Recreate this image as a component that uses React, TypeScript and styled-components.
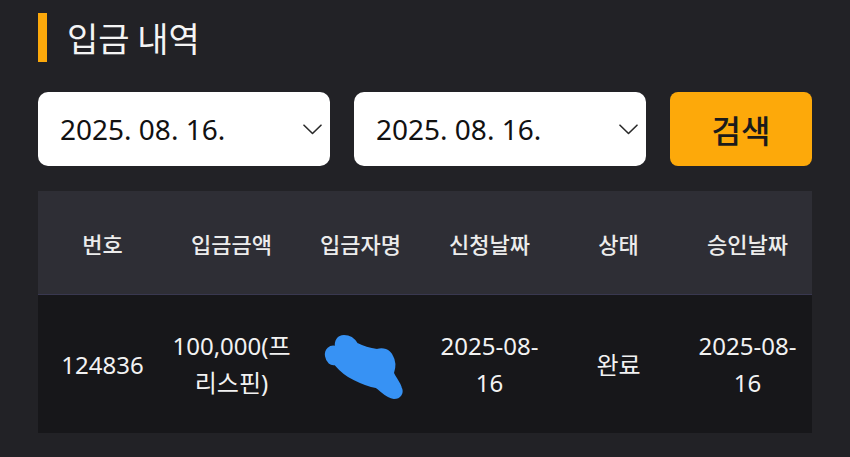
import React from 'react';
import styled, { createGlobalStyle } from 'styled-components';

type Deposit = {
    id: number;
    amount: string;
    name: string;
    requestedAt: string;
    status: string;
    approvedAt: string;
};

const columns = ['번호', '입금금액', '입금자명', '신청날짜', '상태', '승인날짜'];

const deposits: Deposit[] = [
    {
        id: 124836,
        amount: '100,000(프리스핀)',
        name: '',
        requestedAt: '2025-08-16',
        status: '완료',
        approvedAt: '2025-08-16',
    },
];

const GlobalStyle = createGlobalStyle`
    html, body {
        margin: 0;
        padding: 0;
        background: #222226;
    }
    body {
        font-family: 'Noto Sans', 'Noto Sans CJK KR', sans-serif;
        color: #ffffff;
    }
`;

const Chevron = () => (
    <svg width="19" height="11" viewBox="0 0 19 11" fill="none">
        <path d="M1 1.2L9.5 9.5L18 1.2" stroke="#2a2a2a" strokeWidth="1.6" strokeLinecap="round" strokeLinejoin="round" />
    </svg>
);

// blue marker scribble hiding the depositor name
const Redaction = () => (
    <svg width="90" height="72" viewBox="0 0 90 72" fill="none">
        <path
            d="M24 5 C18 5 15 10 16 16 C10 14 5 19 6 25 C7 31 11 34 15 33 C21 40 27 45 34 48 C42 52 50 55 56 56 C62 60 66 66 74 67 C80 67 83 62 81 57 C79 51 75 47 73 42 C75 36 75 30 72 25 C69 19 63 17 57 19 C50 18 43 16 37 13 C34 8 30 5 24 5 Z"
            fill="#3792f4"
            stroke="#3792f4"
            strokeWidth="2"
            strokeLinejoin="round"
        />
    </svg>
);

// splits "2025-08-16" so it wraps after the month like the app does
const splitDate = (date: string) => {
    const idx = date.lastIndexOf('-') + 1;
    return (
        <>
            {date.slice(0, idx)}
            <br />
            {date.slice(idx)}
        </>
    );
};

const DepositHistory: React.FC = () => {
    return (
        <Page>
            <GlobalStyle />
            <TitleRow>
                <TitleMark />
                <Title>입금 내역</Title>
            </TitleRow>
            <SearchRow>
                <DateSelect>
                    <DateText>2025. 08. 16.</DateText>
                    <Chevron />
                </DateSelect>
                <DateSelect>
                    <DateText>2025. 08. 16.</DateText>
                    <Chevron />
                </DateSelect>
                <SearchButton>검색</SearchButton>
            </SearchRow>
            <Table>
                <HeadRow>
                    {columns.map((c) => (
                        <HeadCell key={c}>{c}</HeadCell>
                    ))}
                </HeadRow>
                {deposits.map((d) => (
                    <BodyRow key={d.id}>
                        <Cell>{d.id}</Cell>
                        <Cell>{d.amount}</Cell>
                        <Cell>
                            <NameBox>
                                {d.name}
                                <RedactOverlay>
                                    <Redaction />
                                </RedactOverlay>
                            </NameBox>
                        </Cell>
                        <Cell>{splitDate(d.requestedAt)}</Cell>
                        <Cell>{d.status}</Cell>
                        <Cell>{splitDate(d.approvedAt)}</Cell>
                    </BodyRow>
                ))}
            </Table>
        </Page>
    );
};

const Page = styled.div`
    width: 850px;
    height: 457px;
    box-sizing: border-box;
    padding: 13px 38px 0;
    background: #222226;
    overflow: hidden;
`;

const TitleRow = styled.div`
    display: flex;
    align-items: center;
    height: 49px;
    gap: 20px;
`;

const TitleMark = styled.div`
    width: 9px;
    height: 49px;
    background: #fca90b;
`;

const Title = styled.h1`
    margin: 0;
    font-family: 'Noto Sans CJK KR', sans-serif;
    font-size: 34px;
    font-weight: 400;
    line-height: 49px;
    color: #f4f4f4;
`;

const SearchRow = styled.div`
    display: flex;
    gap: 24px;
    margin-top: 30px;
    height: 74px;
`;

const DateSelect = styled.div`
    display: flex;
    align-items: center;
    justify-content: space-between;
    width: 292px;
    box-sizing: border-box;
    padding: 0 8px 0 22px;
    background: #ffffff;
    border-radius: 10px;
`;

const DateText = styled.span`
    font-family: 'Noto Sans', sans-serif;
    font-size: 28px;
    color: #111111;
`;

const SearchButton = styled.button`
    flex: 1;
    border: none;
    border-radius: 8px;
    background: #fda90a;
    color: #1b1b1b;
    font-family: 'Noto Sans CJK KR', sans-serif;
    font-size: 32px;
    font-weight: 500;
    padding: 0;
    cursor: pointer;
`;

const Table = styled.div`
    margin-top: 25px;
    width: 774px;
`;

const HeadRow = styled.div`
    display: grid;
    grid-template-columns: repeat(6, 1fr);
    height: 103px;
    align-items: center;
    background: #2e2e35;
    border-bottom: 1px solid #393850;
`;

const HeadCell = styled.div`
    text-align: center;
    font-family: 'Noto Sans CJK KR', sans-serif;
    font-size: 22px;
    font-weight: 500;
    color: #ececec;
`;

const BodyRow = styled.div`
    display: grid;
    grid-template-columns: repeat(6, 1fr);
    height: 138px;
    align-items: center;
    background: #17171a;
`;

const Cell = styled.div`
    text-align: center;
    font-family: 'Noto Sans', 'Noto Sans CJK KR', sans-serif;
    font-size: 24px;
    line-height: 37px;
    color: #f2f2f2;
`;

const NameBox = styled.div`
    position: relative;
    height: 74px;
`;

const RedactOverlay = styled.div`
    position: absolute;
    left: 24px;
    top: 4px;
    width: 90px;
    height: 72px;
    line-height: 0;
`;

export default function App() {
    return <DepositHistory />;
}
